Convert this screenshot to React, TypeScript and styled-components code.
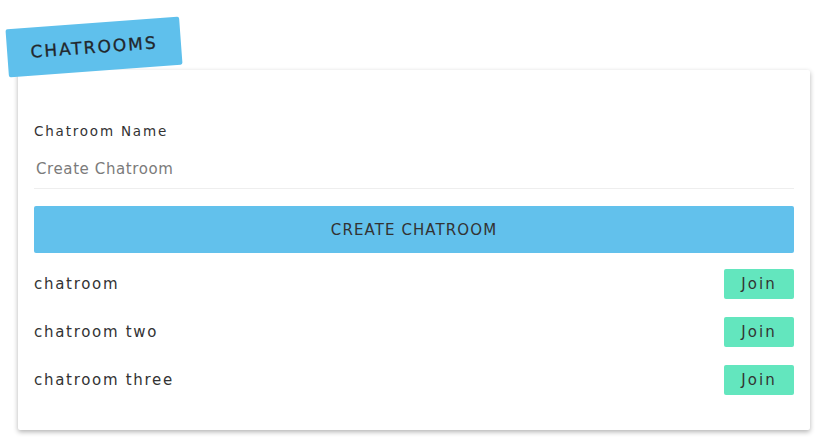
import React from "react";
import styled, { createGlobalStyle } from "styled-components";

const GlobalStyle = createGlobalStyle`
  body {
    margin: 0;
    background: #fff;
    font-family: "DejaVu Sans", "Open Sans", sans-serif;
    color: #333;
  }
`;

const Page = styled.div`
  position: relative;
  padding: 70px 11px 14px 18px;
`;

const Tag = styled.div`
  position: absolute;
  left: 7px;
  top: 23px;
  width: 174px;
  height: 48px;
  display: flex;
  align-items: center;
  justify-content: center;
  background: #5fc0ec;
  border-radius: 2px;
  transform: rotate(-4.2deg);
  font-size: 17px;
  letter-spacing: 2px;
  color: #22272b;
  -webkit-text-stroke: 0.3px #22272b;
  z-index: 2;
`;

const Card = styled.div`
  background: #fff;
  box-shadow: 0 2px 5px rgba(0, 0, 0, 0.3);
  border-radius: 2px;
  padding: 53px 16px 26px;
`;

const Label = styled.label`
  display: block;
  font-size: 13.5px;
  line-height: 16px;
  letter-spacing: 1.8px;
  color: #333;
`;

const Input = styled.input`
  display: block;
  width: 100%;
  box-sizing: border-box;
  height: 40px;
  margin-top: 10px;
  border: 0;
  border-bottom: 1px solid #eee;
  padding: 0 2px;
  font-family: inherit;
  font-size: 15px;
  letter-spacing: 0.6px;
  color: #333;
  outline: none;
  &::placeholder {
    color: #7b7b7b;
  }
`;

const CreateButton = styled.button`
  display: block;
  width: 100%;
  height: 47px;
  margin: 17px 0 7px;
  border: 0;
  border-radius: 2px;
  background: #62c1ec;
  font-family: inherit;
  font-size: 15px;
  letter-spacing: 1.1px;
  color: #333;
`;

const Row = styled.div`
  height: 48px;
  display: flex;
  align-items: center;
  justify-content: space-between;
`;

const RoomName = styled.span`
  font-size: 15px;
  letter-spacing: 1.7px;
  color: #333;
`;

const JoinButton = styled.button`
  width: 70px;
  height: 30px;
  border: 0;
  border-radius: 2px;
  background: #63e6be;
  font-family: inherit;
  font-size: 15px;
  letter-spacing: 2px;
  color: #333;
`;

const rooms = ["chatroom", "chatroom two", "chatroom three"];

export default function App() {
  return (
    <Page>
      <GlobalStyle />
      <Tag>CHATROOMS</Tag>
      <Card>
        <Label>Chatroom Name</Label>
        <Input placeholder="Create Chatroom" />
        <CreateButton>CREATE CHATROOM</CreateButton>
        {rooms.map((r) => (
          <Row key={r}>
            <RoomName>{r}</RoomName>
            <JoinButton>Join</JoinButton>
          </Row>
        ))}
      </Card>
    </Page>
  );
}
